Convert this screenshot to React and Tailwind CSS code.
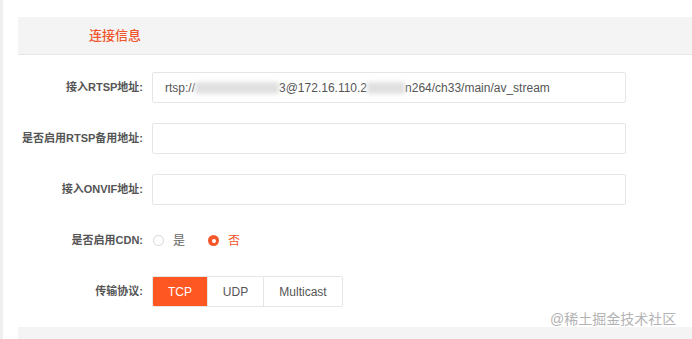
import { useState } from "react";

const font = { fontFamily: '"Liberation Sans", "Noto Sans CJK SC", sans-serif' };

function Field({ label, children }) {
  return (
    <div className="flex items-center h-[31px] mb-5">
      <label className="w-[134px] shrink-0 pr-[9px] flex justify-end whitespace-nowrap text-[11px] font-semibold text-[#555]">
        {label}
      </label>
      {children}
    </div>
  );
}

function Blur({ w }) {
  return <span className={`inline-block h-[12px] align-middle bg-[#e0e0e0] blur-[2px] ${w}`}></span>;
}

function Radio({ on, text, onClick, className }) {
  return (
    <button className={`flex items-center gap-[9px] ${className}`} onClick={onClick}>
      {on ? (
        <span className="w-[11px] h-[11px] rounded-full bg-[#f5572b] flex items-center justify-center">
          <span className="w-[4px] h-[4px] rounded-full bg-white"></span>
        </span>
      ) : (
        <span className="w-[11px] h-[11px] rounded-full border border-[#d6d6d6]"></span>
      )}
      <span className={on ? "text-[#f5572b]" : "text-[#666]"}>{text}</span>
    </button>
  );
}

export default function App() {
  const [cdn, setCdn] = useState(false);
  const [proto, setProto] = useState("TCP");

  return (
    <div className="w-[692px] h-[339px] overflow-hidden bg-[#efefef] pl-[3px]" style={font}>
      <div className="relative h-full bg-white pt-[17px] pl-[15px]">
        {/* card header */}
        <div className="h-[38px] bg-[#f4f4f4] border-b border-[#e6e6e6] flex items-center pl-[71px]">
          <span className="text-[13px] font-medium text-[#f0552c]">连接信息</span>
        </div>

        <div className="pt-[17px]">
          <Field label="接入RTSP地址:">
            <div className="w-[474px] h-[31px] border border-[#e6e6e6] rounded-[2px] flex items-center pl-[12px] text-[12px] text-[#555] whitespace-nowrap">
              rtsp://<Blur w="w-[84px]" />3@172.16.110.2<Blur w="w-[38px]" />n264/ch33/main/av_stream
            </div>
          </Field>
          <Field label="是否启用RTSP备用地址:">
            <div className="w-[474px] h-[31px] border border-[#e6e6e6] rounded-[2px]"></div>
          </Field>
          <Field label="接入ONVIF地址:">
            <div className="w-[474px] h-[31px] border border-[#e6e6e6] rounded-[2px]"></div>
          </Field>
          <Field label="是否启用CDN:">
            <div className="flex items-center text-[12px]">
              <Radio on={cdn} text="是" onClick={() => setCdn(true)} className="pl-[1px]" />
              <Radio on={!cdn} text="否" onClick={() => setCdn(false)} className="ml-[23px]" />
            </div>
          </Field>
          <Field label="传输协议:">
            <div className="flex h-[31px] border border-[#e6e6e6] rounded-[2px] text-[12px] overflow-hidden">
              {[
                { k: "TCP", w: "w-[54px]" },
                { k: "UDP", w: "w-[56px]" },
                { k: "Multicast", w: "w-[79px]" },
              ].map((x, i) => (
                <button
                  key={x.k}
                  onClick={() => setProto(x.k)}
                  className={`${x.w} h-full flex items-center justify-center ${i > 0 ? "border-l border-[#e6e6e6]" : ""} ${
                    proto === x.k ? "bg-[#ff5722] text-white" : "bg-white text-[#555]"
                  }`}
                >
                  {x.k}
                </button>
              ))}
            </div>
          </Field>
        </div>

        <div className="h-[12px] bg-[#f4f4f4]"></div>

        {/* watermark */}
        <div className="absolute left-[547px] top-[309px] text-[14px] text-[#b3b3b3] whitespace-nowrap">
          @稀土掘金技术社区
        </div>
      </div>
    </div>
  );
}
